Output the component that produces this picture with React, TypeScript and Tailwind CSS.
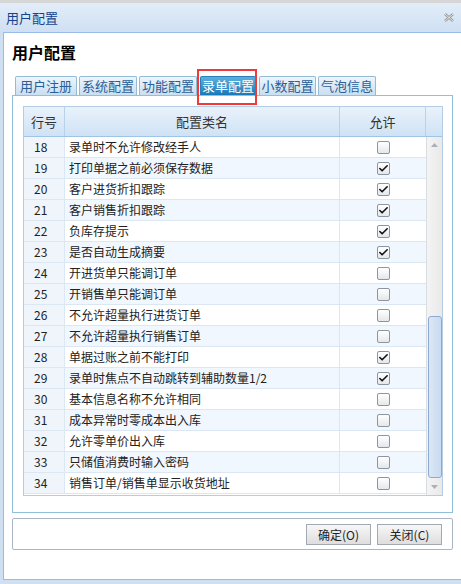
import { Check } from "lucide-react";

const rows = [
  { no: 18, name: "录单时不允许修改经手人", allow: false },
  { no: 19, name: "打印单据之前必须保存数据", allow: true },
  { no: 20, name: "客户进货折扣跟踪", allow: true },
  { no: 21, name: "客户销售折扣跟踪", allow: true },
  { no: 22, name: "负库存提示", allow: true },
  { no: 23, name: "是否自动生成摘要", allow: true },
  { no: 24, name: "开进货单只能调订单", allow: false },
  { no: 25, name: "开销售单只能调订单", allow: false },
  { no: 26, name: "不允许超量执行进货订单", allow: false },
  { no: 27, name: "不允许超量执行销售订单", allow: false },
  { no: 28, name: "单据过账之前不能打印", allow: true },
  { no: 29, name: "录单时焦点不自动跳转到辅助数量1/2", allow: true },
  { no: 30, name: "基本信息名称不允许相同", allow: false },
  { no: 31, name: "成本异常时零成本出入库", allow: false },
  { no: 32, name: "允许零单价出入库", allow: false },
  { no: 33, name: "只储值消费时输入密码", allow: false },
  { no: 34, name: "销售订单/销售单显示收货地址", allow: false },
];

const tabs = [
  { label: "用户注册", w: "w-[62px]" },
  { label: "系统配置", w: "w-[58px]" },
  { label: "功能配置", w: "w-[58px]" },
  { label: "录单配置", w: "w-[56px]", active: true },
  { label: "小数配置", w: "w-[57px]" },
  { label: "气泡信息", w: "w-[58px]" },
];

function Checkbox({ checked }: { checked: boolean }) {
  return (
    <div className="w-[13px] h-[13px] rounded-[2px] border border-[#8e959c] bg-gradient-to-b from-white to-[#e4e8ec] flex items-center justify-center">
      {checked && <Check className="w-[11px] h-[11px] text-[#111]" strokeWidth={3.5} />}
    </div>
  );
}

export default function App() {
  return (
    <div
      className="w-[461px] h-[584px] bg-[#cfe0f2] border-t-[3px] border-[#d6d6d6] flex flex-col overflow-hidden"
      style={{ fontFamily: '"Noto Sans CJK SC", "Noto Sans", sans-serif' }}
    >
      {/* Title bar */}
      <div className="h-[29px] shrink-0 bg-gradient-to-b from-[#e2edf8] to-[#cfe0f3] flex items-center justify-between pl-[6px] pr-[6px]">
        <span className="text-[13px] text-[#15428b]">用户配置</span>
        <svg width="10" height="9" viewBox="0 0 10 9" className="mr-[1px]">
          <path d="M1 1 L9 8 M9 1 L1 8" stroke="#9a9a9a" strokeWidth="2.4" />
          <path d="M1 1 L9 8 M9 1 L1 8" stroke="#f2f2f2" strokeWidth="0.8" />
        </svg>
      </div>

      {/* Window body */}
      <div className="ml-[3px] h-[548px] shrink-0 bg-white border-t border-l border-b border-[#99bbe8] pl-[8px] w-[458px]">
        <div className="pt-[9px] h-[43px] text-[16px] font-bold leading-[20px] text-black">用户配置</div>

        {/* Tabs */}
        <div className="flex gap-[2px] pl-[3px] h-[19px] items-end">
          {tabs.map((t) =>
            t.active ? (
              <div key={t.label} className={`relative ${t.w} h-[19px] ml-[1px] mr-[1px]`}>
                <div className="h-full rounded-t-[2px] border border-b-0 border-[#2a7db5] bg-gradient-to-b from-[#5cb0de] to-[#157ab8] text-white text-[13px] leading-[18px] text-center">
                  {t.label}
                </div>
                <span className="absolute -left-[3px] -top-[7px] w-[60px] h-[36px] border-2 border-[#f03a3a]" />
              </div>
            ) : (
              <div
                key={t.label}
                className={`${t.w} h-[19px] rounded-t-[2px] border border-b-0 border-[#94bad6] bg-gradient-to-b from-[#eef5fc] to-[#c9dff0] text-[#2a5f98] text-[13px] leading-[18px] text-center`}
              >
                {t.label}
              </div>
            )
          )}
        </div>

        {/* Tab panel */}
        <div className="w-[441px] h-[418px] border border-[#8fc1da] pt-[10px] pl-[10px]">
          <div className="w-[420px] h-[390px] border border-[#b5cde4] flex flex-col text-[12px] text-[#222]">
            {/* Header */}
            <div className="h-[30px] flex bg-gradient-to-b from-[#e9f2fb] to-[#cfe2f5] border-b border-[#9fc4e4] text-[13px] text-[#333]">
              <div className="w-[41px] border-r border-[#b8d2ea] flex items-center justify-center">行号</div>
              <div className="w-[275px] border-r border-[#b8d2ea] flex items-center justify-center">配置类名</div>
              <div className="w-[86px] border-r border-[#b8d2ea] flex items-center justify-center">允许</div>
              <div className="flex-1" />
            </div>

            <div className="flex flex-1">
              <div className="w-[402px]">
                {rows.map((r, i) => (
                  <div
                    key={r.no}
                    className={`h-[21px] flex border-b border-[#dbe8f4] ${i % 2 === 1 ? "bg-[#f1f7fe]" : "bg-white"}`}
                  >
                    <div className="w-[41px] bg-[#eff5fb] border-r border-[#dbe8f4] pl-[10px] leading-[20px]">{r.no}</div>
                    <div className="w-[275px] border-r border-[#dbe8f4] pl-[4px] leading-[20px] whitespace-nowrap">{r.name}</div>
                    <div className="w-[86px] flex items-center justify-center">
                      <Checkbox checked={r.allow} />
                    </div>
                  </div>
                ))}
              </div>

              {/* Scrollbar */}
              <div className="flex-1 border-l border-[#d8dde2] bg-gradient-to-r from-[#f4f4f4] to-[#e9e9e9] flex flex-col items-center">
                <div className="h-[16px] flex items-center justify-center">
                  <svg width="7" height="4" viewBox="0 0 7 4">
                    <path d="M0 4 L3.5 0 L7 4 Z" fill="#a9b0b8" />
                  </svg>
                </div>
                <div className="h-[163px]" />
                <div className="w-[14px] h-[162px] rounded-[3px] border border-[#8eaad2] bg-gradient-to-r from-[#dbe7f5] to-[#c8dbf0]" />
                <div className="flex-1 flex items-center justify-center">
                  <svg width="7" height="4" viewBox="0 0 7 4">
                    <path d="M0 0 L7 0 L3.5 4 Z" fill="#a9b0b8" />
                  </svg>
                </div>
              </div>
            </div>
          </div>
        </div>

        {/* Button bar */}
        <div className="mt-[5px] w-[441px] h-[32px] rounded-[2px] border border-[#aab6c3] flex items-center justify-end gap-[6px] pr-[10px]">
          <button className="w-[65px] h-[21px] border border-[#a3a9b0] bg-gradient-to-b from-[#f7f7f7] to-[#dedede] text-[12px] text-[#222] leading-[19px]">
            确定(O)
          </button>
          <button className="w-[65px] h-[21px] border border-[#a3a9b0] bg-gradient-to-b from-[#f7f7f7] to-[#dedede] text-[12px] text-[#222] leading-[19px]">
            关闭(C)
          </button>
        </div>
      </div>
    </div>
  );
}
